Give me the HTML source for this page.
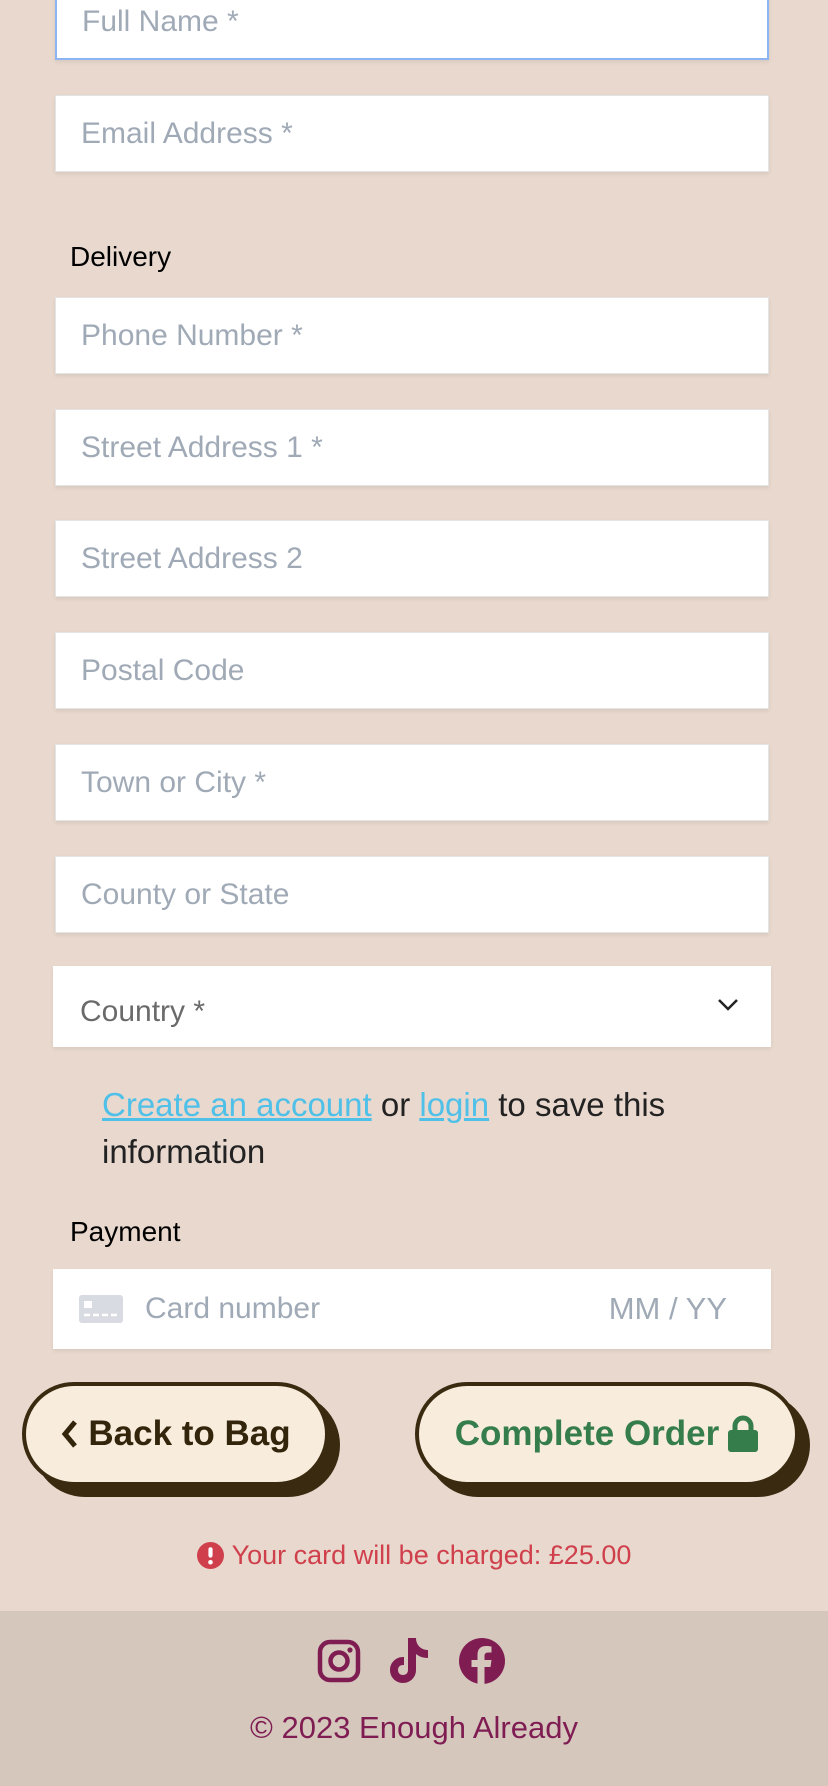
<!DOCTYPE html>
<html><head><meta charset="utf-8"><style>
*{margin:0;padding:0;box-sizing:border-box}
body{width:828px;height:1786px;background:#e8d8ce;font-family:"Liberation Sans",Arial,sans-serif;position:relative;overflow:hidden}
.in{position:absolute;left:55px;width:714px;height:77px;background:#fff;box-shadow:0 2px 4px rgba(0,0,0,.07);border:1px solid #e4e4e4;color:#a0aab6;font-size:30px;padding-left:25px;line-height:75px}
.lab{position:absolute;left:70px;font-size:28px;color:#000}
.btn{position:absolute;top:1382px;height:104px;background:#f8ecdd;border:4px solid #3a2a10;border-radius:52px;box-shadow:11px 11px 0 #3a2a10;font-weight:bold;font-size:35px;display:flex;align-items:center;justify-content:center}
a{color:#4fc0e8;text-decoration:underline}
</style></head><body>
<div class="in" style="top:-18px;height:78px;border:2px solid #8db4f2;line-height:76px">Full Name *</div>
<div class="in" style="top:95px">Email Address *</div>
<div class="lab" style="top:241px">Delivery</div>
<div class="in" style="top:297px">Phone Number *</div>
<div class="in" style="top:409px">Street Address 1 *</div>
<div class="in" style="top:520px">Street Address 2</div>
<div class="in" style="top:632px">Postal Code</div>
<div class="in" style="top:744px">Town or City *</div>
<div class="in" style="top:856px">County or State</div>
<div class="in" style="top:966px;left:53px;width:718px;height:81px;color:#6a6a6a;line-height:92px;border:none;padding-left:27px">Country *
<svg style="position:absolute;left:664px;top:32px" width="22" height="14" viewBox="0 0 22 14"><path d="M2 2l9 9 9-9" fill="none" stroke="#222" stroke-width="2.5"/></svg></div>
<div style="position:absolute;left:102px;top:1081px;width:640px;font-size:33px;line-height:47px;color:#222">
<a>Create an account</a> or <a>login</a> to save this information</div>
<div class="lab" style="top:1216px">Payment</div>
<div class="in" style="top:1269px;left:53px;width:718px;height:80px;border:none;line-height:80px;padding-left:92px">Card number
<span style="position:absolute;right:44px;font-size:31px">MM / YY</span>
<svg style="position:absolute;left:26px;top:26px" width="44" height="28" viewBox="0 0 44 28"><rect width="44" height="28" rx="3" fill="#d8dbe1"/><rect x="5" y="6" width="8" height="7" fill="#fff"/><path d="M5 20h6M14 20h6M23 20h6M32 20h6" stroke="#fff" stroke-width="2.5"/></svg></div>
<div class="btn" style="left:22px;width:307px;color:#33240c">
<svg width="20" height="32" viewBox="0 0 20 32" style="margin-right:8px"><path d="M15 4L5 16l10 12" fill="none" stroke="#33240c" stroke-width="5"/></svg>Back to Bag</div>
<div class="btn" style="left:415px;width:384px;color:#367d4c">Complete Order
<svg width="32" height="38" viewBox="0 0 32 38" style="margin-left:8px"><path d="M8 16v-5a8 8 0 0 1 16 0v5" fill="none" stroke="#367d4c" stroke-width="5"/><rect x="1" y="15" width="30" height="22" rx="3" fill="#367d4c"/></svg></div>
<div style="position:absolute;left:0;width:828px;top:1540px;text-align:center;color:#d0404c;font-size:27px;display:flex;justify-content:center;align-items:center">
<svg width="27" height="27" viewBox="0 0 26 26" style="margin-right:8px"><circle cx="13" cy="13" r="13" fill="#d0404c"/><rect x="11" y="5" width="4" height="10" rx="2" fill="#fff"/><circle cx="13" cy="19.5" r="2.2" fill="#fff"/></svg>Your card will be charged: £25.00</div>
<div style="position:absolute;left:0;top:1611px;width:828px;height:175px;background:#d6c7bd">
<svg style="position:absolute;left:317px;top:28px" width="44" height="44" viewBox="0 0 44 44"><rect x="3" y="3" width="38" height="38" rx="10" fill="none" stroke="#7f1d53" stroke-width="4.5"/><circle cx="22" cy="22" r="8.5" fill="none" stroke="#7f1d53" stroke-width="4.5"/><circle cx="33" cy="11" r="2.6" fill="#7f1d53"/></svg>
<svg style="position:absolute;left:386px;top:25px" width="44" height="48" viewBox="0 0 44 48"><path d="M22 2h8c0 7 5 12 12 12v8c-5 0-9-1.5-12-4v16c0 7.5-6 13-13 13S4 41.5 4 34s6-13 13-13h1v8h-1c-3 0-5 2-5 5s2 5 5 5 5-2 5-5z" fill="#7f1d53"/></svg>
<svg style="position:absolute;left:459px;top:27px" width="46" height="46" viewBox="0 0 46 46"><circle cx="23" cy="23" r="23" fill="#7f1d53"/><path d="M25.5 46V29h6l1-7h-7v-4c0-2 1-3.5 3.5-3.5h3.5V8.5c-1.5-.2-3.5-.5-5.5-.5-5.5 0-8.5 3.2-8.5 9v5h-6v7h6v17z" fill="#d6c7bd"/></svg>
<div style="position:absolute;top:99px;width:828px;text-align:center;color:#7f1d53;font-size:31px">© 2023 Enough Already</div>
</div>
</body></html>
